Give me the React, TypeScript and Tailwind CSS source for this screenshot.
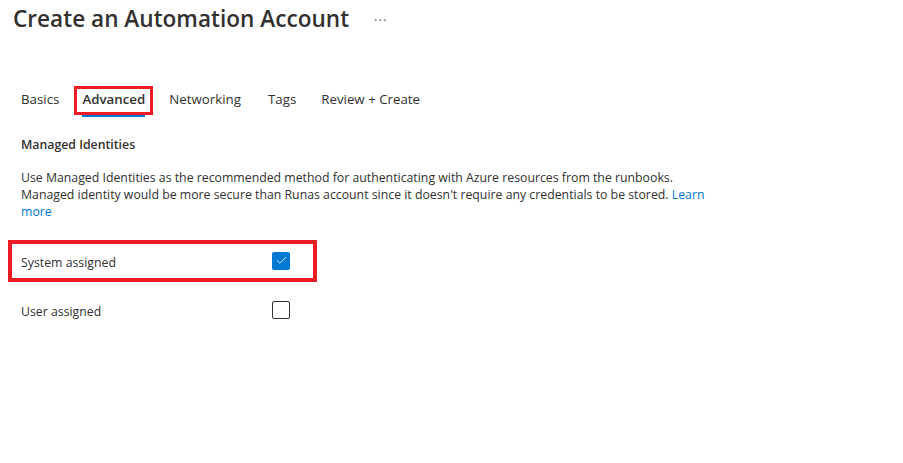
import { Check } from "lucide-react";

const tabs = [
	{ label: "Basics", gap: "" },
	{ label: "Advanced", gap: "ml-[23px]" },
	{ label: "Networking", gap: "ml-[24px]" },
	{ label: "Tags", gap: "ml-[27px]" },
	{ label: "Review + Create", gap: "ml-[25px]" },
];

const Checkbox = ({ checked }: { checked?: boolean }) =>
	checked ? (
		<span className="flex h-[18px] w-[18px] items-center justify-center rounded-[2px] bg-[#0078d4]">
			<Check className="h-[13px] w-[13px] text-white" strokeWidth={1.5} />
		</span>
	) : (
		<span className="block h-[18px] w-[18px] rounded-[2px] border border-[#323130]" />
	);

const App = () => {
	return (
		<div className="h-[463px] w-[903px] overflow-hidden bg-white font-['Open_Sans',sans-serif] text-[#323130]">
			<div className="flex items-center pl-[13px] pt-[3px]">
				<h1 className="text-[22.6px] font-semibold leading-[32px]">Create an Automation Account</h1>
				<span className="ml-[25px] pt-[4px] text-[13px] tracking-[1px] text-[#605e5c]">···</span>
			</div>

			<div className="mt-[49px] flex pl-[21px] text-[13.3px]">
				{tabs.map((tab) => (
					<div key={tab.label} className={`relative py-[6px] ${tab.gap}`}>
						<span className={tab.label === "Advanced" ? "font-semibold" : ""}>{tab.label}</span>
						{tab.label === "Advanced" && (
							<>
								<span className="absolute -bottom-[1px] left-0 right-0 h-[2px] bg-[#0078d4]" />
								<span className="absolute -left-[8px] -right-[8px] bottom-[1px] top-[2px] border-[3px] border-[#ed1c24]" />
							</>
						)}
					</div>
				))}
			</div>

			<div className="mt-[20px] pl-[21px] text-[12.3px]">
				<h2 className="font-semibold leading-[18px]">Managed Identities</h2>
				<p className="mt-[15px] w-[690px] leading-[17px]">
					Use Managed Identities as the recommended method for authenticating with Azure resources from the runbooks.
					Managed identity would be more secure than Runas account since it doesn't require any credentials to be stored.{" "}
					<a className="text-[#0078d4]">Learn more</a>
				</p>

				<div className="relative mt-[32px] grid h-[18px] grid-cols-[251px_18px] items-start">
					<span className="pt-[2px] leading-[18px]">System assigned</span>
					<Checkbox checked />
					<span className="absolute -bottom-[12px] -left-[13px] -top-[12px] w-[309px] border-[4px] border-[#ed1c24]" />
				</div>
				<div className="mt-[31px] grid h-[18px] grid-cols-[251px_18px] items-start">
					<span className="pt-[2px] leading-[18px]">User assigned</span>
					<Checkbox />
				</div>
			</div>
		</div>
	);
};

export default App;
